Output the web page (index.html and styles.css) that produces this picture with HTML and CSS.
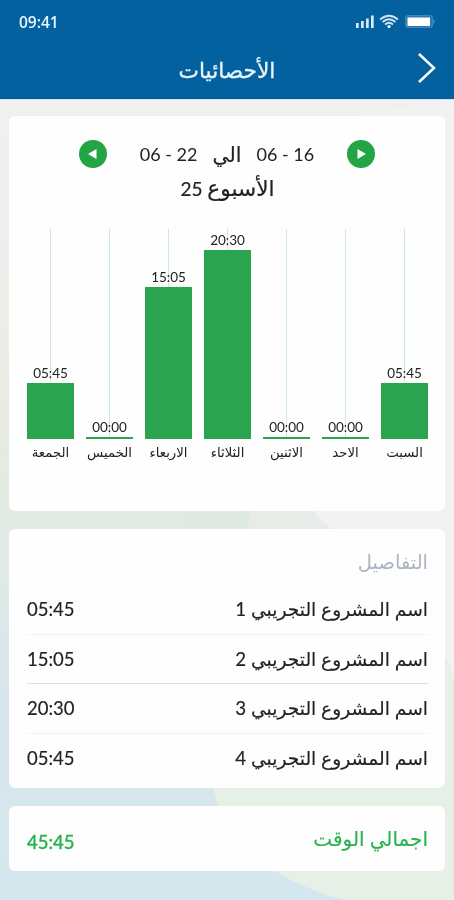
FILE: index.html
```html
<!DOCTYPE html>
<html lang="ar" dir="rtl">
<head>
<meta charset="utf-8">
<meta name="viewport" content="width=device-width, initial-scale=1">
<title>الأحصائيات</title>
<link rel="stylesheet" href="styles.css">
</head>
<body>
<svg class="backdrop" viewBox="0 0 454 900" preserveAspectRatio="none" aria-hidden="true">
  <defs>
    <linearGradient id="wash" x1="0" y1="0" x2="0" y2="1">
      <stop offset="0" stop-color="#f2f2f0"/><stop offset=".25" stop-color="#eeefed"/>
      <stop offset=".5" stop-color="#e6ebe2"/><stop offset=".62" stop-color="#e0ebe6"/>
      <stop offset=".78" stop-color="#d7e6ec"/><stop offset="1" stop-color="#d5e7ee"/>
    </linearGradient>
    <linearGradient id="band" x1="0" y1="0" x2="1" y2="0">
      <stop offset="0" stop-color="#e3eae3"/><stop offset="1" stop-color="#dfe9e4"/>
    </linearGradient>
  </defs>
  <rect width="454" height="900" fill="url(#wash)"/>
  <path d="M10 505H260V535H10Z" fill="url(#band)"/>
  <path d="M227 140L454 98V690H380L330 540L250 500Z" fill="#f2f2f2"/>
  <path d="M254 508H312Q320 522 336 532H244Z" fill="#e8ece8"/>
  <path d="M444 656Q450 662 454 676V900H345C275 883 218 838 212 780C205 720 300 660 444 656Z" fill="#e6f0e7"/>
</svg>
<div class="screen">
  <header class="header">
    <div class="status" dir="ltr">
      <span class="clock">09:41</span>
      <svg class="status-icons" viewBox="0 0 82 16" aria-hidden="true">
        <g fill="#d6e8f5"><rect x="2" y="9" width="2.700" height="5"/><rect x="7" y="7" width="2.700" height="7"/><rect x="12" y="4.500" width="2.700" height="9.500"/><rect x="17" y="1.500" width="2.700" height="12.500"/></g>
        <g fill="none" stroke="#cfe3f1" stroke-width="1.700"><path d="M26 5.500Q35-2 44 5.500"/><path d="M28.500 8Q35 2.500 41.500 8"/><path d="M31 10.500Q35 7 39 10.500"/></g>
        <circle cx="35" cy="12.500" r="1.600" fill="#fff"/>
        <rect x="51.500" y="1.500" width="27" height="12" rx="2.500" fill="#2c78af" stroke="#4088bb"/>
        <rect x="53.500" y="3.500" width="22.500" height="8.500" fill="#fff"/>
        <path d="M79.500 5Q82 7.500 79.500 10Z" fill="#5f9cc7"/>
      </svg>
    </div>
    <div class="titlebar">
      <svg class="back" viewBox="0 0 18 30" aria-hidden="true"><path d="M1 1L16 15L1 29" fill="none" stroke="#fff" stroke-width="2.500"/></svg>
      <h1 class="title">الأحصائيات</h1>
    </div>
  </header>
  <main class="content">
    <section class="card chart-card">
      <div class="period">
        <svg class="step" viewBox="0 0 28 28" aria-hidden="true"><circle cx="14" cy="14" r="14" fill="#23a445"/><path d="M10.500 9V19L19 14Z" fill="#fff"/></svg>
        <div class="range"><span class="date" dir="ltr">06 - 16</span><span class="to">الي</span><span class="date" dir="ltr">06 - 22</span></div>
        <svg class="step" viewBox="0 0 28 28" aria-hidden="true"><circle cx="14" cy="14" r="14" fill="#23a445"/><path d="M17.500 9V19L9 14Z" fill="#fff"/></svg>
      </div>
      <p class="week"><span class="word">الأسبوع</span> 25</p>
      <div class="chart">
        <div class="day"><div class="plot"><span class="value">05:45</span><i class="bar" style="height:56px"></i></div><span class="name">السبت</span></div>
        <div class="day"><div class="plot"><span class="value">00:00</span><i class="bar" style="height:2px"></i></div><span class="name">الاحد</span></div>
        <div class="day"><div class="plot"><span class="value">00:00</span><i class="bar" style="height:2px"></i></div><span class="name">الاثنين</span></div>
        <div class="day"><div class="plot"><span class="value">20:30</span><i class="bar" style="height:189px"></i></div><span class="name">الثلاثاء</span></div>
        <div class="day"><div class="plot"><span class="value">15:05</span><i class="bar" style="height:152px"></i></div><span class="name">الاربعاء</span></div>
        <div class="day"><div class="plot"><span class="value">00:00</span><i class="bar" style="height:2px"></i></div><span class="name">الخميس</span></div>
        <div class="day"><div class="plot"><span class="value">05:45</span><i class="bar" style="height:56px"></i></div><span class="name">الجمعة</span></div>
      </div>
    </section>
    <section class="card details">
      <h2 class="heading">التفاصيل</h2>
      <div class="row"><span class="label">اسم المشروع التجريبي 1</span><span class="time">05:45</span></div>
      <div class="row"><span class="label">اسم المشروع التجريبي 2</span><span class="time">15:05</span></div>
      <div class="row"><span class="label">اسم المشروع التجريبي 3</span><span class="time">20:30</span></div>
      <div class="row"><span class="label">اسم المشروع التجريبي 4</span><span class="time">05:45</span></div>
    </section>
    <section class="card total"><span class="label">اجمالي الوقت</span><span class="time">45:45</span></section>
  </main>
</div>
</body>
</html>
```
FILE: styles.css
```css
* { box-sizing: border-box; }
body { margin: 0; background: #e6eeec; color: #222; font-family: Lato, "DejaVu Sans", sans-serif; }
h1, h2, p { margin: 0; font-weight: 400; }
.backdrop { position: fixed; inset: 0; width: 100%; height: 100%; z-index: -1; }
.screen { height: 900px; overflow: hidden; }
.header { height: 99px; background: #03619f; border-bottom: 1px solid #065590; box-shadow: 0 1px 0 #d3e8f6; color: #e8f5fc; }
.status { display: flex; justify-content: space-between; align-items: center; height: 44px; padding: 0 18px 0 19px; }
.clock { font: 600 15.500px/20px "Open Sans", sans-serif; }
.status-icons { width: 82px; height: 16px; }
.titlebar { display: grid; grid-template-columns: 18px 1fr 18px; align-items: center; height: 50px; padding: 0 18px; }
.back { width: 18px; height: 30px; margin-top: -2px; }
.title { margin-top: 1px; font-size: 21.700px; line-height: 30px; text-align: center; -webkit-text-stroke: .3px; }
.content { display: flex; flex-direction: column; gap: 18px; padding: 17px 9px 0; }
.card { background: #fefefe; border-radius: 6px; padding: 0 17px 0 18px; }
.chart-card { height: 395px; padding-top: 23px; }
.period { display: flex; justify-content: space-between; align-items: center; height: 29px; padding: 0 53px 0 52px; }
.step { width: 28px; height: 28px; }
.range { display: flex; align-items: center; gap: 15px; font-size: 18px; line-height: 28px; }
.date { white-space: nowrap; }
.to { font-size: 20.500px; -webkit-text-stroke: .15px; }
.week { height: 30px; margin-top: 5px; text-align: center; font-size: 19px; line-height: 30px; -webkit-text-stroke: .2px; }
.word { font-size: 21.700px; }
.chart { display: flex; justify-content: space-between; margin-top: 26px; }
.day { width: 47px; display: flex; flex-direction: column; align-items: center; }
.plot { width: 100%; height: 210px; display: flex; flex-direction: column; justify-content: flex-end; align-items: center; background: linear-gradient(#c9eadc, #c9eadc) center / 1px 100% no-repeat; }
.value { font-size: 13.500px; line-height: 20px; }
.bar { display: block; width: 100%; flex: none; background: #2aa44e; }
.name { font-size: 13.300px; line-height: 20px; margin-top: 3px; white-space: nowrap; }
.details { height: 259px; padding-top: 17px; }
.heading { height: 39px; color: #a9b5c2; font-size: 19.500px; line-height: 32px; }
.row { display: flex; justify-content: space-between; align-items: center; height: 49.500px; border-bottom: 1px solid #f2f2f2; }
.row:last-child { border-bottom: 0; }
.row:nth-child(3) { border-color: #dedede; }
.label { font-size: 18.700px; line-height: 30px; white-space: nowrap; -webkit-text-stroke: .15px; }
.time { font-size: 18.500px; line-height: 30px; direction: ltr; -webkit-text-stroke: .15px; }
.total { display: flex; justify-content: space-between; align-items: center; height: 65px; color: #27b34f; }
.total .label { font-size: 20px; margin-top: -2px; }
.total .time { padding-top: 6px; -webkit-text-stroke: .4px; }
```
